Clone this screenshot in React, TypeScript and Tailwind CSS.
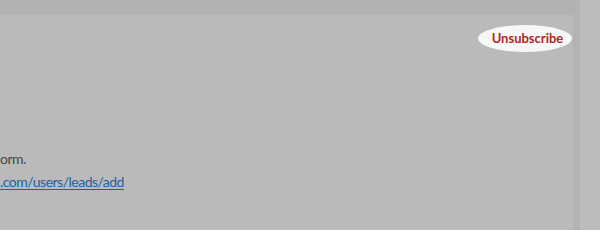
import React from "react";

export default function App() {
  return (
    <div
      className="flex h-[230px] w-[600px] overflow-hidden bg-[#bcbcbc]"
      style={{ fontFamily: 'Lato, "Noto Sans", sans-serif' }}
    >
      <div className="flex w-[580px] flex-col bg-[#b2b2b2]">
        <div className="h-[15px]" />
        <div className="flex w-[573px] flex-1 flex-col bg-[#bababa]">
          <div className="flex justify-end pt-[10px] pr-[1px]">
            <button className="flex h-[27px] w-[94px] items-center justify-center rounded-[50%] bg-[#f7f7f7] pl-[5px] text-[13px] font-bold text-[#b32626]">
              Unsubscribe
            </button>
          </div>
          <div className="mt-[95px] text-[14px] leading-[23px] tracking-[-0.5px] text-[#474747]">
            <p>orm.</p>
            <p>
              <a className="text-[#2a5d9e] underline underline-offset-2">.com/users/leads/add</a>
            </p>
          </div>
        </div>
      </div>
    </div>
  );
}
